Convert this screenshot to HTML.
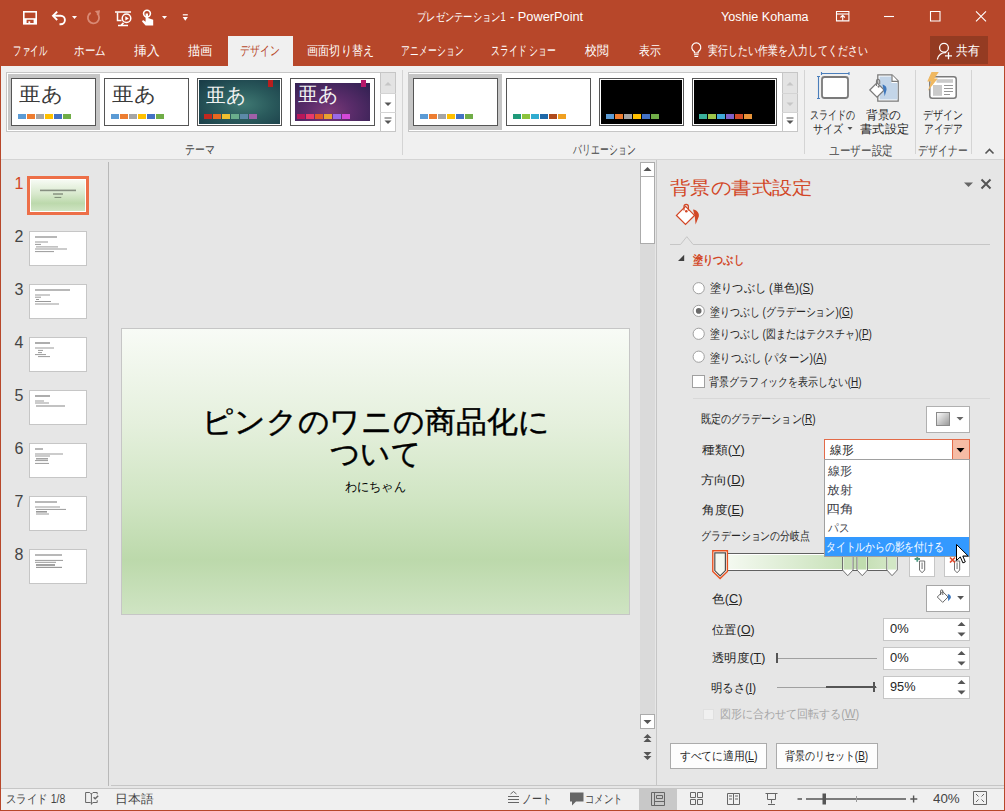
<!DOCTYPE html>
<html><head><meta charset="utf-8"><style>
*{box-sizing:border-box}
html,body{margin:0;padding:0}
body{width:1005px;height:811px;position:relative;overflow:hidden;background:#e6e6e6;font-family:"Liberation Sans",sans-serif}
.a{position:absolute}
.tx{position:absolute;z-index:3;white-space:nowrap;line-height:1.2;transform-origin:0 0}
</style></head><body>
<!-- title bar + tabs -->
<div class="a" style="left:0;top:0;width:1005px;height:66px;background:#b7472a"></div>
<!-- window border left/right/bottom -->
<div class="a" style="left:0;top:0;width:1px;height:811px;background:#b7472a;z-index:5"></div>
<div class="a" style="left:1004px;top:0;width:1px;height:811px;background:#b7472a;z-index:5"></div>
<div class="a" style="left:0;top:810px;width:1005px;height:1px;background:#b7472a;z-index:5"></div>
<!-- QAT icons -->
<svg class="a" style="left:0;top:0" width="200" height="36" viewBox="0 0 200 36">
 <path d="M23 11h14v13.6H23z" fill="#fff"/>
 <path d="M24.6 12.6h10.8v5.6H24.6z" fill="#b7472a"/>
 <path d="M26.6 19.8h7v3.2h-7z" fill="#b7472a"/>
 <path d="M28.4 21.3h1.8v1.8h-1.8z" fill="#fff"/>
 <path d="M53.5 15.8h7.2a4.2 4.2 0 0 1 0 8.4h-1.2" fill="none" stroke="#fff" stroke-width="1.9"/>
 <path d="M57.2 11.6l-4.2 4.2 4.2 4.2" fill="none" stroke="#fff" stroke-width="1.9"/>
 <path d="M72 16h5l-2.5 3z" fill="#fff"/>
 <path d="M90.7 12.9A5.6 5.6 0 1 0 97 13.4" fill="none" stroke="#d98a75" stroke-width="1.8"/>
 <path d="M94.8 11l5.2-0.8-0.9 5.4z" fill="#d98a75"/>
 <g fill="none" stroke="#fff" stroke-width="1.5">
  <path d="M115 12h16"/>
  <path d="M117.5 12.5v8h4"/>
  <circle cx="126.5" cy="18.3" r="4.3"/>
  <path d="M118 25.4h10M121 25.4l2.5-2.5"/>
 </g>
 <path d="M125.3 16.2v4.4l3.5-2.2z" fill="#fff"/>
 <circle cx="147" cy="13.6" r="3.4" fill="none" stroke="#fff" stroke-width="1.6"/>
 <path d="M145.6 13.5v8.2l-2.6-1.6-1 1.4 3.6 4h7.6v-5.8l-5.2-1.7v-4.5z" fill="#fff"/>
 <path d="M162 16h5l-2.5 3z" fill="#fff"/>
 <path d="M182.8 14.8h5" stroke="#fff" stroke-width="1.2"/>
 <path d="M182.7 17h5.2l-2.6 3.8z" fill="#fff"/>
</svg>
<!-- title right icons -->
<svg class="a" style="left:820px;top:0" width="185" height="36" viewBox="820 0 185 36">
 <g fill="none" stroke="#fff" stroke-width="1.1">
  <path d="M836.5 11.5h12.4v9.4h-12.4z"/>
  <path d="M836.5 14h12.4"/>
  <path d="M842.7 20.5v-5M840.5 17.5l2.2-2.2 2.2 2.2"/>
  <path d="M884 16.5h10"/>
  <path d="M930.5 11.5h9.5v9.5h-9.5z"/>
  <path d="M976 11.3l10 10M986 11.3l-10 10"/>
 </g>
</svg>
<!-- selected tab -->
<div class="a" style="left:228px;top:36px;width:65px;height:30px;background:#f0f0f0"></div>
<!-- bulb icon -->
<svg class="a" style="left:685px;top:38px" width="20" height="22" viewBox="685 38 20 22">
 <path d="M694.4 53v-1.5a4.5 4.5 0 1 1 3.8 0V53z" fill="none" stroke="#fff" stroke-width="1.2" stroke-linejoin="round"/>
 <path d="M694 54.8h4.6M694.4 56.5h3.8" stroke="#fff" stroke-width="1.1"/>
</svg>
<!-- share -->
<div class="a" style="left:930px;top:36px;width:58px;height:28px;background:#943b22"></div>
<svg class="a" style="left:930px;top:36px" width="30" height="28" viewBox="930 36 30 28">
 <g fill="none" stroke="#fff" stroke-width="1.3">
  <circle cx="944" cy="47.7" r="4.4"/>
  <path d="M937.3 59.5a8 8 0 0 1 9-6.8"/>
  <path d="M948.5 52.3v7M945 55.8h7"/>
 </g>
</svg>

<!-- ribbon -->
<div class="a" style="left:1px;top:66px;width:1003px;height:93px;background:#f0f0f0"></div>
<div class="a" style="left:1px;top:159px;width:1003px;height:1px;background:#d4d4d4"></div>

<!-- theme gallery -->
<div class="a" style="left:6px;top:72px;width:390px;height:60px;background:#fff;border:1px solid #c6c6c6"></div>
<div class="a" style="left:8px;top:74px;width:92px;height:56px;background:#c6c6c6"></div>
<div class="a" style="left:11px;top:78px;width:85px;height:48px;background:#fff;border:1px solid #555"></div>
<div class="a" style="left:104px;top:78px;width:85px;height:48px;background:#fff;border:1px solid #555"></div>
<div class="a" style="left:197px;top:78px;width:85px;height:48px;background:#fff;border:1px solid #555"></div>
<div class="a" style="left:199px;top:80px;width:81px;height:44px;background:radial-gradient(ellipse at 55% 55%,#3f7872 0%,#2a5a5c 45%,#183a46 100%)"></div>
<div class="a" style="left:268px;top:80px;width:5px;height:7px;background:#b81e1e"></div>
<div class="a" style="left:290px;top:78px;width:85px;height:48px;background:#fff;border:1px solid #555"></div>
<div class="a" style="left:295px;top:83px;width:75px;height:38px;background:radial-gradient(ellipse at 45% 75%,#7c3a78 0%,#5a2c6a 40%,#2e2050 100%)"></div>
<div class="a" style="left:361px;top:80px;width:5px;height:7px;background:#b8186a"></div>
<!-- gallery scroll -->
<div class="a" style="left:380px;top:72px;width:16px;height:60px;background:#fff;border:1px solid #c6c6c6"></div>
<div class="a" style="left:381px;top:73px;width:14px;height:20px;background:#e3e3e3"></div>
<div class="a" style="left:380px;top:93px;width:16px;height:1px;background:#d4d4d4"></div>
<div class="a" style="left:380px;top:112px;width:16px;height:1px;background:#d4d4d4"></div>
<svg class="a" style="left:380px;top:72px" width="16" height="60" viewBox="0 0 16 60">
 <path d="M4.5 13.5h7l-3.5-3.5z" fill="#c6c6c6"/>
 <path d="M4.5 30.5h7l-3.5 3.5z" fill="#555"/>
 <path d="M4.5 46h7" stroke="#555" stroke-width="1"/>
 <path d="M4.5 48.5h7l-3.5 3.5z" fill="#555"/>
</svg>
<!-- swatches -->
<svg class="a" style="left:0;top:110px" width="800" height="12" viewBox="0 110 800 12">
 <g>
  <rect x="18" y="114" width="8" height="5" fill="#5b9bd5"/><rect x="27" y="114" width="8" height="5" fill="#ed7d31"/><rect x="36" y="114" width="8" height="5" fill="#a5a5a5"/><rect x="45" y="114" width="8" height="5" fill="#ffc000"/><rect x="54" y="114" width="8" height="5" fill="#4472c4"/><rect x="63" y="114" width="8" height="5" fill="#70ad47"/>
  <rect x="111" y="114" width="8" height="5" fill="#5b9bd5"/><rect x="120" y="114" width="8" height="5" fill="#ed7d31"/><rect x="129" y="114" width="8" height="5" fill="#a5a5a5"/><rect x="138" y="114" width="8" height="5" fill="#ffc000"/><rect x="147" y="114" width="8" height="5" fill="#4472c4"/><rect x="156" y="114" width="8" height="5" fill="#70ad47"/>
  <rect x="204" y="114" width="8" height="5" fill="#c0281f"/><rect x="213" y="114" width="8" height="5" fill="#e8681f"/><rect x="222" y="114" width="8" height="5" fill="#f0c030"/><rect x="231" y="114" width="8" height="5" fill="#6aae8c"/><rect x="240" y="114" width="8" height="5" fill="#5c8aa8"/><rect x="249" y="114" width="8" height="5" fill="#a060a8"/>
  <rect x="297" y="114" width="8" height="5" fill="#b8185a"/><rect x="306" y="114" width="8" height="5" fill="#e83a6a"/><rect x="315" y="114" width="8" height="5" fill="#e05a28"/><rect x="324" y="114" width="8" height="5" fill="#e8a030"/><rect x="333" y="114" width="8" height="5" fill="#9a6ae8"/><rect x="342" y="114" width="8" height="5" fill="#d448d8"/>
 </g>
</svg>
<!-- group sep -->
<div class="a" style="left:402px;top:70px;width:1px;height:85px;background:#d4d4d4"></div>
<!-- variation gallery -->
<div class="a" style="left:408px;top:72px;width:390px;height:60px;background:#fff;border:1px solid #c6c6c6"></div>
<div class="a" style="left:409px;top:74px;width:93px;height:56px;background:#c6c6c6"></div>
<div class="a" style="left:413px;top:78px;width:85px;height:48px;background:#fff;border:1px solid #555"></div>
<div class="a" style="left:506px;top:78px;width:85px;height:48px;background:#fff;border:1px solid #555"></div>
<div class="a" style="left:599px;top:78px;width:85px;height:48px;background:#000;border:1px solid #555;box-shadow:inset 0 0 0 1px #fff"></div>
<div class="a" style="left:692px;top:78px;width:85px;height:48px;background:#000;border:1px solid #555;box-shadow:inset 0 0 0 1px #fff"></div>
<div class="a" style="left:782px;top:72px;width:16px;height:60px;background:#fff;border:1px solid #c6c6c6"></div>
<div class="a" style="left:783px;top:73px;width:14px;height:39px;background:#e3e3e3"></div>
<div class="a" style="left:782px;top:93px;width:16px;height:1px;background:#d4d4d4"></div>
<div class="a" style="left:782px;top:112px;width:16px;height:1px;background:#d4d4d4"></div>
<svg class="a" style="left:782px;top:72px" width="16" height="60" viewBox="0 0 16 60">
 <path d="M4.5 13.5h7l-3.5-3.5z" fill="#c6c6c6"/>
 <path d="M4.5 30.5h7l-3.5 3.5z" fill="#c6c6c6"/>
 <path d="M4.5 46h7" stroke="#555" stroke-width="1"/>
 <path d="M4.5 48.5h7l-3.5 3.5z" fill="#555"/>
</svg>
<svg class="a" style="left:400px;top:110px" width="400" height="12" viewBox="400 110 400 12">
  <rect x="420" y="114" width="8" height="5" fill="#5b9bd5"/><rect x="429" y="114" width="8" height="5" fill="#ed7d31"/><rect x="438" y="114" width="8" height="5" fill="#a5a5a5"/><rect x="447" y="114" width="8" height="5" fill="#ffc000"/><rect x="456" y="114" width="8" height="5" fill="#4472c4"/><rect x="465" y="114" width="8" height="5" fill="#70ad47"/>
  <rect x="513" y="114" width="8" height="5" fill="#1f9a7a"/><rect x="522" y="114" width="8" height="5" fill="#8cc43c"/><rect x="531" y="114" width="8" height="5" fill="#30acd0"/><rect x="540" y="114" width="8" height="5" fill="#1f68a8"/><rect x="549" y="114" width="8" height="5" fill="#b04a1c"/><rect x="558" y="114" width="8" height="5" fill="#f0a020"/>
  <rect x="606" y="114" width="8" height="5" fill="#5b9bd5"/><rect x="615" y="114" width="8" height="5" fill="#ed7d31"/><rect x="624" y="114" width="8" height="5" fill="#a5a5a5"/><rect x="633" y="114" width="8" height="5" fill="#ffc000"/><rect x="642" y="114" width="8" height="5" fill="#4472c4"/><rect x="651" y="114" width="8" height="5" fill="#70ad47"/>
  <rect x="699" y="114" width="8" height="5" fill="#3ab09a"/><rect x="708" y="114" width="8" height="5" fill="#9cc44a"/><rect x="717" y="114" width="8" height="5" fill="#40a8d8"/><rect x="726" y="114" width="8" height="5" fill="#8060c8"/><rect x="735" y="114" width="8" height="5" fill="#d04a28"/><rect x="744" y="114" width="8" height="5" fill="#e8943a"/>
</svg>
<div class="a" style="left:804px;top:70px;width:1px;height:84px;background:#d4d4d4"></div>
<div class="a" style="left:915px;top:70px;width:1px;height:84px;background:#d4d4d4"></div>
<div class="a" style="left:971px;top:70px;width:1px;height:84px;background:#d4d4d4"></div>
<!-- slide size icon -->
<svg class="a" style="left:810px;top:68px" width="100" height="40" viewBox="810 68 100 40">
 <rect x="822" y="77" width="26" height="21" rx="2.5" fill="#fff" stroke="#7a7a7a" stroke-width="1.8"/>
 <path d="M821.5 73.5h27.5M821.5 72v3M849 72v3M818.5 76.5v22M817 76.5h3M817 98.5h3" stroke="#4a7ebb" stroke-width="1.1" fill="none"/>
 <path d="M877.8 74.8h14.2l6.2 6.2v20.2h-20.4z" fill="#fff" stroke="#7a7a7a" stroke-width="1.3"/>
 <path d="M879.5 76.5h12v6.5h6v16.5h-18z" fill="#c3d5e8"/>
 <path d="M892 75v6.4h6.2" fill="#fff" stroke="#7a7a7a" stroke-width="1.2"/>
 <path d="M869.8 90l7.2-7.2 7.2 7.2-7.2 7.2z" fill="#fff" stroke="#7a7a7a" stroke-width="1.2"/>
 <path d="M876.5 86v-5a1.6 1.6 0 0 1 3.2 0v3" fill="none" stroke="#7a7a7a" stroke-width="1.1"/>
 <circle cx="878.6" cy="86.6" r="1.1" fill="#7a7a7a"/>
 <path d="M882.5 84.5c2.5 0.5 4.5 2.5 4 5.5l-1.8 6.2-1-5.5z" fill="#3f78bd"/>
</svg>
<svg class="a" style="left:846px;top:126px" width="10" height="6" viewBox="0 0 10 6"><path d="M1.5 1h5l-2.5 3z" fill="#555"/></svg>
<!-- designer icon -->
<svg class="a" style="left:915px;top:68px" width="56" height="40" viewBox="915 68 56 40">
 <rect x="929.8" y="76.8" width="26.4" height="21.4" rx="2.5" fill="#fff" stroke="#7a7a7a" stroke-width="1.5"/>
 <rect x="936.5" y="79.2" width="16.5" height="3.6" fill="#cacaca"/>
 <rect x="933" y="85" width="9" height="10.8" fill="#cacaca"/>
 <path d="M944 85.5h9M944 88.5h9M944 91.5h9M944 94.5h6" stroke="#8a8a8a" stroke-width="0.9"/>
 <path d="M931.5 72h7.3l-4.5 6.5h3.5l-10 12.5 3.5-9.5h-4z" fill="#f0b860"/>
</svg>
<!-- collapse caret -->
<svg class="a" style="left:982px;top:145px" width="16" height="12" viewBox="0 0 16 12"><path d="M3.5 8.5l4-4 4 4" fill="none" stroke="#555" stroke-width="1.6"/></svg>

<!-- left slide panel -->
<div class="a" style="left:108px;top:162px;width:1px;height:624px;background:#b8b8b8"></div>
<!-- slide thumbnails -->
<div class="a" style="left:27px;top:176px;width:62px;height:39px;background:#fff;border:3px solid #ed6f48"></div>
<div class="a" style="left:31px;top:180px;width:54px;height:31px;background:linear-gradient(#f6faf3,#d8e9cd 45%,#bcd9ac 75%,#cfe4c3)"></div>
<div class="a" style="left:29px;top:231px;width:58px;height:35px;background:#fff;border:1px solid #c6c6c6"></div>
<div class="a" style="left:29px;top:284px;width:58px;height:35px;background:#fff;border:1px solid #c6c6c6"></div>
<div class="a" style="left:29px;top:337px;width:58px;height:35px;background:#fff;border:1px solid #c6c6c6"></div>
<div class="a" style="left:29px;top:390px;width:58px;height:35px;background:#fff;border:1px solid #c6c6c6"></div>
<div class="a" style="left:29px;top:443px;width:58px;height:35px;background:#fff;border:1px solid #c6c6c6"></div>
<div class="a" style="left:29px;top:496px;width:58px;height:35px;background:#fff;border:1px solid #c6c6c6"></div>
<div class="a" style="left:29px;top:549px;width:58px;height:35px;background:#fff;border:1px solid #c6c6c6"></div>
<svg class="a" style="left:0;top:160px" width="100" height="440" viewBox="0 160 100 440">
<rect x="35" y="236.3" width="22" height="1.4" fill="#000" opacity=".4"/>
<rect x="35" y="241.5" width="13" height="1" fill="#000" opacity=".4"/>
<rect x="35" y="243.9" width="6" height="1" fill="#000" opacity=".4"/>
<rect x="36" y="246.4" width="22" height="1" fill="#000" opacity=".4"/>
<rect x="35" y="248.5" width="32" height="1" fill="#000" opacity=".4"/>
<rect x="35" y="251.1" width="19" height="1" fill="#000" opacity=".4"/>
<rect x="35" y="289.3" width="35" height="1.4" fill="#000" opacity=".4"/>
<rect x="35" y="294.5" width="15" height="1" fill="#000" opacity=".4"/>
<rect x="35" y="296.7" width="6" height="1" fill="#000" opacity=".4"/>
<rect x="36" y="299.0" width="3" height="1" fill="#000" opacity=".4"/>
<rect x="35" y="301.0" width="16" height="1" fill="#000" opacity=".4"/>
<rect x="35" y="303.5" width="24" height="1" fill="#000" opacity=".4"/>
<rect x="35" y="342.2" width="15" height="1.6" fill="#000" opacity=".4"/>
<rect x="35" y="347.5" width="19" height="1" fill="#000" opacity=".4"/>
<rect x="38" y="349.9" width="5" height="1" fill="#000" opacity=".4"/>
<rect x="38" y="352.1" width="4" height="1" fill="#000" opacity=".4"/>
<rect x="35" y="354.1" width="11" height="1" fill="#000" opacity=".4"/>
<rect x="38" y="356.1" width="12" height="1" fill="#000" opacity=".4"/>
<rect x="35" y="395.2" width="15" height="1.6" fill="#000" opacity=".4"/>
<rect x="35" y="400.5" width="9" height="1" fill="#000" opacity=".4"/>
<rect x="35" y="402.5" width="14" height="1" fill="#000" opacity=".4"/>
<rect x="36" y="405.4" width="29" height="1.2" fill="#000" opacity=".4"/>
<rect x="35" y="448.3" width="8" height="1.4" fill="#000" opacity=".4"/>
<rect x="35" y="453.5" width="28" height="1" fill="#000" opacity=".4"/>
<rect x="35" y="455.5" width="15" height="1" fill="#000" opacity=".4"/>
<rect x="36" y="458.1" width="12" height="1.4" fill="#000" opacity=".4"/>
<rect x="35" y="460.1" width="13" height="1" fill="#000" opacity=".4"/>
<rect x="35" y="462.9" width="14" height="1" fill="#000" opacity=".4"/>
<rect x="35" y="501.3" width="22" height="1.4" fill="#000" opacity=".4"/>
<rect x="35" y="506.5" width="25" height="1" fill="#000" opacity=".4"/>
<rect x="36" y="508.9" width="30" height="1" fill="#000" opacity=".4"/>
<rect x="36" y="511.0" width="11" height="1.6" fill="#000" opacity=".4"/>
<rect x="36" y="513.5" width="13" height="1" fill="#000" opacity=".4"/>
<rect x="35" y="554.3" width="27" height="1.4" fill="#000" opacity=".4"/>
<rect x="35" y="559.9" width="28" height="1" fill="#000" opacity=".4"/>
<rect x="35" y="561.8" width="21" height="1" fill="#000" opacity=".4"/>
<rect x="36" y="564.1" width="19" height="1.8" fill="#000" opacity=".4"/>
<rect x="36" y="566.8" width="26" height="1.2" fill="#000" opacity=".4"/>
<rect x="40" y="189.6" width="36.0" height="1.6" fill="#000" opacity=".4"/>
<rect x="53" y="193.3" width="10.0" height="1.4" fill="#000" opacity=".4"/>
<rect x="54.5" y="196.9" width="6.8" height="1" fill="#000" opacity=".4"/>
</svg>
<!-- slide numbers -->
<div class="a" style="left:14.5px;top:175px;font-size:16px;line-height:18px;color:#d24726">1</div>
<div class="a" style="left:14.5px;top:228px;font-size:16px;line-height:18px;color:#444">2</div>
<div class="a" style="left:14.5px;top:281px;font-size:16px;line-height:18px;color:#444">3</div>
<div class="a" style="left:14.5px;top:334px;font-size:16px;line-height:18px;color:#444">4</div>
<div class="a" style="left:14.5px;top:387px;font-size:16px;line-height:18px;color:#444">5</div>
<div class="a" style="left:14.5px;top:440px;font-size:16px;line-height:18px;color:#444">6</div>
<div class="a" style="left:14.5px;top:493px;font-size:16px;line-height:18px;color:#444">7</div>
<div class="a" style="left:14.5px;top:546px;font-size:16px;line-height:18px;color:#444">8</div>

<!-- main slide -->
<div class="a" style="left:121px;top:328px;width:509px;height:287px;border:1px solid #c6c6c6;background:linear-gradient(#f8fbf6 0%,#e5f0dd 33%,#d0e5c3 60%,#bcd9ab 81%,#cfe4c3 100%)"></div>
<!-- vertical scrollbar -->
<div class="a" style="left:656px;top:160px;width:1px;height:626px;background:#c6c6c6"></div>
<div class="a" style="left:640px;top:162px;width:15px;height:567px;background:#dadada"></div>
<div class="a" style="left:640px;top:162px;width:15px;height:15px;background:#fff;border:1px solid #ababab"></div>
<div class="a" style="left:640px;top:176px;width:15px;height:68px;background:#fff;border:1px solid #ababab"></div>
<div class="a" style="left:640px;top:714px;width:15px;height:15px;background:#fff;border:1px solid #ababab"></div>
<svg class="a" style="left:640px;top:162px" width="15" height="15" viewBox="0 0 15 15"><path d="M3.5 9h8l-4-4z" fill="#555"/></svg>
<svg class="a" style="left:640px;top:714px" width="15" height="15" viewBox="0 0 15 15"><path d="M3.5 6h8l-4 4z" fill="#555"/></svg>
<svg class="a" style="left:640px;top:730px" width="15" height="34" viewBox="0 0 15 34">
 <path d="M3.5 8h8l-4-4z M3.5 12h8l-4-4z" fill="#555"/>
 <path d="M3.5 22h8l-4 4z M3.5 26h8l-4 4z" fill="#555"/>
</svg>
<!-- main area bottom line -->
<div class="a" style="left:111px;top:785px;width:893px;height:1px;background:#c6c6c6"></div>

<!-- task pane -->
<svg class="a" style="left:660px;top:170px" width="340" height="100" viewBox="660 170 340 100">
 <path d="M964 182.5h9l-4.5 4.5z" fill="#666"/>
 <path d="M981.5 179.5l9 9M990.5 179.5l-9 9" stroke="#555" stroke-width="2"/>
 <path d="M676.5 215.4l9-9 9 9-9 9z" fill="#fff" stroke="#d24726" stroke-width="1.3"/>
 <path d="M684 210.5v-4a2.2 2.2 0 0 1 4.4 0v4" fill="none" stroke="#d24726" stroke-width="1.2"/>
 <circle cx="686.3" cy="211.3" r="1.3" fill="#d24726"/>
 <path d="M693 209.5c4 0.5 6.5 3.5 5.8 7l-3.2 8-0.8-8z" fill="#d24726"/>
 <path d="M670 244.5h10.5l6.3-7.8 6.3 7.8H990" fill="none" stroke="#c6c6c6" stroke-width="1"/>
 <path d="M678 261h6.2v-6.2z" fill="#404040"/>
</svg>
<!-- radios -->
<svg class="a" style="left:688px;top:278px" width="22" height="115" viewBox="688 278 22 115">
 <g fill="#fff" stroke="#a0a0a0" stroke-width="1">
  <circle cx="698.7" cy="288.2" r="5.6"/>
  <circle cx="698.7" cy="310.9" r="5.6"/>
  <circle cx="698.7" cy="333.8" r="5.6"/>
  <circle cx="698.7" cy="356.7" r="5.6"/>
  <rect x="692.5" y="375.5" width="12" height="12"/>
 </g>
 <circle cx="698.7" cy="310.9" r="2.8" fill="#6a6a6a"/>
</svg>
<!-- preset gradient button -->
<div class="a" style="left:926px;top:406px;width:44px;height:27px;background:#fff;border:1px solid #b0b0b0"></div>
<div class="a" style="left:936px;top:412px;width:14px;height:14px;border:1px solid #8a8a8a;background:linear-gradient(135deg,#fafafa,#9a9a9a)"></div>
<svg class="a" style="left:955px;top:415px" width="10" height="8" viewBox="0 0 10 8"><path d="M1.5 2h7l-3.5 3.5z" fill="#666"/></svg>
<!-- section line -->
<div class="a" style="left:693px;top:398px;width:297px;height:1px;background:#d8d8d8"></div>
<!-- combo type -->
<div class="a" style="left:824px;top:439px;width:146px;height:21px;background:#fff;border:1px solid #e36a48"></div>
<div class="a" style="left:952px;top:440px;width:17px;height:19px;background:#f6bca5;border-left:1px solid #e36a48"></div>
<svg class="a" style="left:952px;top:440px" width="17" height="19" viewBox="0 0 17 19"><path d="M4.5 8h8l-4 4.5z" fill="#000"/></svg>
<!-- gradient stops bar -->
<div class="a" style="left:720px;top:553px;width:177px;height:18px;border:1px solid #606060;background:#fff"></div>
<div class="a" style="left:722px;top:555px;width:173px;height:14px;background:linear-gradient(90deg,#f6faf3,#c9e2ba 70%,#c4deb3 80%,#d5e8c8)"></div>
<svg class="a" style="left:705px;top:545px" width="200" height="40" viewBox="705 545 200 40">
 <path d="M712.8 550.8h14.6v20.6l-7.3 7.2-7.3-7.2z" fill="#fff" stroke="#e8501e" stroke-width="1.4"/>
 <path d="M714.8 552.8h10.6v17.8l-5.3 5.3-5.3-5.3z" fill="#f3f8f1" stroke="#505050" stroke-width="1.2"/>
 <path d="M842.5 553.5h10.5v16.5l-5.25 5.7-5.25-5.7z" fill="#fff" stroke="#707070" stroke-width="1"/>
 <rect x="843.5" y="554.5" width="8.5" height="15" fill="#c6dfb6"/>
 <path d="M857 553.5h10.5v16.5l-5.25 5.7-5.25-5.7z" fill="#fff" stroke="#707070" stroke-width="1"/>
 <rect x="858" y="554.5" width="8.5" height="15" fill="#c0dcae"/>
 <path d="M886.8 553.5h10.5v16.5l-5.25 5.7-5.25-5.7z" fill="#fff" stroke="#707070" stroke-width="1"/>
 <rect x="887.8" y="554.5" width="8.5" height="15" fill="#d2e7c5"/>
</svg>
<!-- add/remove stop -->
<div class="a" style="left:909px;top:553px;width:26px;height:24px;background:#fff;border:1px solid #c6c6c6"></div>
<div class="a" style="left:944px;top:553px;width:26px;height:24px;background:#fff;border:1px solid #c6c6c6"></div>
<svg class="a" style="left:905px;top:545px" width="70" height="40" viewBox="905 545 70 40">
 <path d="M919.5 561v9l2.6 2.8 2.6-2.8v-9z" fill="#fff" stroke="#707070" stroke-width="1"/>
 <rect x="921.4" y="562.5" width="1.4" height="6.5" fill="#9a9a9a"/>
 <path d="M914.6 559h5.4M917.3 556.3v5.4" stroke="#4f9a84" stroke-width="1.8"/>
 <path d="M954.5 561v9l2.6 2.8 2.6-2.8v-9z" fill="#fff" stroke="#707070" stroke-width="1"/>
 <rect x="956.4" y="562.5" width="1.4" height="6.5" fill="#9a9a9a"/>
 <path d="M950 557.5l5 5M955 557.5l-5 5" stroke="#e0482a" stroke-width="1.7"/>
</svg>
<!-- color button -->
<div class="a" style="left:926px;top:585px;width:44px;height:27px;background:#fff;border:1px solid #a6a6a6"></div>
<svg class="a" style="left:926px;top:585px" width="44" height="27" viewBox="926 585 44 27">
 <path d="M937.3 597l5.4-5.4 5.4 5.4-5.4 5.4z" fill="#fff" stroke="#555" stroke-width="0.9"/>
 <path d="M940.6 595v-4a1.1 1.1 0 0 1 2.2 0v4" fill="none" stroke="#555" stroke-width="0.9"/>
 <path d="M947.8 594c2.2 0.2 3.6 2.2 3 4l-2.6 3.2z" fill="#3f78bd"/>
 <path d="M957.2 596h6.8l-3.4 3.8z" fill="#555"/>
</svg>
<!-- spin boxes -->
<div class="a" style="left:883px;top:618px;width:87px;height:23px;background:#fff;border:1px solid #c6c6c6"></div>
<div class="a" style="left:883px;top:647px;width:87px;height:23px;background:#fff;border:1px solid #c6c6c6"></div>
<div class="a" style="left:883px;top:676px;width:87px;height:23px;background:#fff;border:1px solid #c6c6c6"></div>
<svg class="a" style="left:950px;top:615px" width="20" height="90" viewBox="950 615 20 90">
 <g fill="#555">
  <path d="M957.5 626h8l-4-4z"/><path d="M957.5 632.5h8l-4 4z"/>
  <path d="M957.5 655h8l-4-4z"/><path d="M957.5 661.5h8l-4 4z"/>
  <path d="M957.5 684h8l-4-4z"/><path d="M957.5 690.5h8l-4 4z"/>
 </g>
</svg>
<!-- sliders -->
<div class="a" style="left:777px;top:658px;width:100px;height:1px;background:#a0a0a0"></div>
<div class="a" style="left:776px;top:653px;width:2px;height:10px;background:#555"></div>
<div class="a" style="left:777px;top:687px;width:100px;height:1px;background:#a0a0a0"></div>
<div class="a" style="left:826px;top:686px;width:50px;height:2px;background:#555"></div>
<div class="a" style="left:873px;top:682px;width:2px;height:10px;background:#555"></div>
<!-- disabled checkbox -->
<div class="a" style="left:703px;top:709px;width:11px;height:11px;background:#f0f0f0;border:1px solid #e0e0e0"></div>
<!-- buttons -->
<div class="a" style="left:670px;top:743px;width:97px;height:26px;background:#fdfdfd;border:1px solid #ababab"></div>
<div class="a" style="left:776px;top:743px;width:102px;height:26px;background:#fdfdfd;border:1px solid #ababab"></div>

<!-- dropdown list -->
<div class="a" style="left:824px;top:459px;width:146px;height:98px;background:#fff;border:1px solid #a0a0a0;z-index:2"></div>
<div class="a" style="left:825px;top:537px;width:144px;height:19px;background:#3399ff;z-index:2"></div>

<!-- status bar -->
<div class="a" style="left:1px;top:788px;width:1003px;height:1px;background:#c6c6c6"></div>
<div class="a" style="left:1px;top:789px;width:1003px;height:21px;background:#f0f0f0"></div>
<div class="a" style="left:639px;top:789px;width:38px;height:21px;background:#c8c8c8"></div>
<svg class="a" style="left:0;top:786px" width="1005" height="25" viewBox="0 786 1005 25">
 <g fill="none" stroke="#666" stroke-width="1">
  <path d="M91.4 803.5l-1-1H85.6v-10h4.2l1.6 1.6 1.6-1.6h4.2v1.8M97.2 800.2v2.3h-4.2l-1.6 1.5M91.4 793.5v11"/>
  <path d="M93.6 797.2l1.6 1.6 3-3" stroke-width="1.5"/>
  <path d="M508 796.5h11M508 799.5h11M508 802.5h11M510.5 794l3-2.5 3 2.5"/>
  <path d="M651.5 792.5h13v13h-13zM654.5 792.5v13M656.5 795.5h6v3h-6zM654.5 801.5h10"/>
  <path d="M690.5 792.5h5v5h-5zM697.5 792.5h5v5h-5zM690.5 799.5h5v5h-5zM697.5 799.5h5v5h-5z"/>
  <path d="M727.5 793.5h6v11h-6zM733.5 793.5h6v11h-6zM729 796h3M729 799h3M735 796h3M735 799h3"/>
  <path d="M765.5 793.5h12M767.5 793.5v6h8v-6M771.5 799.5v4M768 804.5h7"/>
  <path d="M973.5 791.5h13v13h-13zM976 794l2.5 2.5M984 794l-2.5 2.5M976 802l2.5-2.5M984 802l-2.5-2.5"/>
 </g>
 <path d="M570 792.5h13.5v9h-7.5l-4 4v-4h-2z" fill="#666"/>
 <path d="M797.5 799h4.5M806 799h100M910.3 799h7M913.6 795.5v7" stroke="#555" stroke-width="1.4"/>
 <path d="M856.5 796v6" stroke="#999" stroke-width="1"/>
 <rect x="822.5" y="793.5" width="3.5" height="11" fill="#555"/>
</svg>
<!-- mouse cursor -->
<svg class="a" style="left:950px;top:540px;z-index:4" width="24" height="30" viewBox="950 540 24 30">
 <path d="M956.5 544.5v16l3.8-3.6 2.6 6 2.4-1-2.5-5.9h5.4z" fill="#fff" stroke="#000" stroke-width="1" stroke-linejoin="miter"/>
</svg>

<span id="t0" class="tx" style="font-size:12px;color:#fff;left:417.23px;top:10.00px;transform:scale(0.7743,1.000);">プレゼンテーション1</span>
<span id="t1" class="tx" style="font-size:12.5px;color:#fff;left:509.78px;top:10.00px;transform:scale(1.0225,1.000);">- PowerPoint</span>
<span id="t2" class="tx" style="font-size:12px;color:#fff;left:721.00px;top:10.30px;transform:scale(1.0476,1.000);">Yoshie Kohama</span>
<span id="t3" class="tx" style="font-size:12px;color:#fff;left:13.29px;top:43.30px;transform:scale(0.7149,1.100);">ファイル</span>
<span id="t4" class="tx" style="font-size:12px;color:#fff;left:74.17px;top:43.30px;transform:scale(0.8882,1.100);">ホーム</span>
<span id="t5" class="tx" style="font-size:12px;color:#fff;left:134.16px;top:43.30px;transform:scale(1.0739,1.100);">挿入</span>
<span id="t6" class="tx" style="font-size:12px;color:#fff;left:188.00px;top:43.30px;transform:scale(1.0348,1.100);">描画</span>
<span id="t7" class="tx" style="font-size:12px;color:#fff;left:307.06px;top:43.30px;transform:scale(0.9357,1.100);">画面切り替え</span>
<span id="t8" class="tx" style="font-size:12px;color:#fff;left:401.26px;top:43.30px;transform:scale(0.7439,1.100);">アニメーション</span>
<span id="t9" class="tx" style="font-size:12px;color:#fff;left:491.25px;top:43.30px;transform:scale(0.7471,1.100);">スライド ショー</span>
<span id="t10" class="tx" style="font-size:12px;color:#fff;left:585.00px;top:43.30px;transform:scale(1.0000,1.100);">校閲</span>
<span id="t11" class="tx" style="font-size:12px;color:#fff;left:639.00px;top:43.30px;transform:scale(0.9167,1.100);">表示</span>
<span id="t12" class="tx" style="font-size:12px;color:#fff;left:708.00px;top:43.30px;transform:scale(0.8333,1.100);">実行したい作業を入力してください</span>
<span id="t13" class="tx" style="font-size:12px;color:#fff;left:956.00px;top:43.30px;transform:scale(1.0000,1.100);">共有</span>
<span id="t14" class="tx" style="font-size:12px;color:#b7472a;left:239.61px;top:43.30px;transform:scale(0.8326,1.100);">デザイン</span>
<span id="t15" class="tx" style="font-size:12px;color:#444;left:185.43px;top:142.30px;transform:scale(0.8353,1.100);">テーマ</span>
<span id="t16" class="tx" style="font-size:12px;color:#444;left:573.00px;top:142.30px;transform:scale(0.7434,1.100);">バリエーション</span>
<span id="t17" class="tx" style="font-size:12px;color:#262626;left:809.71px;top:108.00px;transform:scale(0.7508,1.000);">スライドの</span>
<span id="t18" class="tx" style="font-size:12px;color:#262626;left:813.17px;top:121.70px;transform:scale(0.8286,1.000);">サイズ</span>
<span id="t19" class="tx" style="font-size:12px;color:#262626;left:866.03px;top:108.00px;transform:scale(0.9714,1.000);">背景の</span>
<span id="t20" class="tx" style="font-size:12px;color:#262626;left:860.00px;top:121.70px;transform:scale(1.0213,1.000);">書式設定</span>
<span id="t21" class="tx" style="font-size:12px;color:#444;left:828.75px;top:142.90px;transform:scale(0.8915,1.100);">ユーザー設定</span>
<span id="t22" class="tx" style="font-size:12px;color:#262626;left:923.17px;top:108.00px;transform:scale(0.8261,1.000);">デザイン</span>
<span id="t23" class="tx" style="font-size:12px;color:#262626;left:924.20px;top:121.70px;transform:scale(0.8043,1.000);">アイデア</span>
<span id="t24" class="tx" style="font-size:12px;color:#444;left:917.61px;top:142.90px;transform:scale(0.8276,1.100);">デザイナー</span>
<span id="t25" class="tx" style="font-size:20px;color:#3a3a3a;left:19.00px;top:81.70px;transform:scale(1.0789,1.000);">亜あ</span>
<span id="t26" class="tx" style="font-size:20px;color:#3a3a3a;left:112.00px;top:81.70px;transform:scale(1.0789,1.000);">亜あ</span>
<span id="t27" class="tx" style="font-size:20px;color:#f2f2f2;left:205.78px;top:82.50px;transform:scale(0.9816,1.000);">亜あ</span>
<span id="t28" class="tx" style="font-size:20px;color:#f2f2f2;left:298.39px;top:82.30px;transform:scale(0.9921,1.000);">亜あ</span>
<span id="t29" class="tx" style="font-size:30px;color:#000;-webkit-text-stroke:0.45px #000;left:202.24px;top:404.10px;transform:scale(1.0279,1.000);">ピンクのワニの商品化に</span>
<span id="t30" class="tx" style="font-size:30px;color:#000;-webkit-text-stroke:0.45px #000;left:330.03px;top:435.70px;transform:scale(0.9818,1.000);">ついて</span>
<span id="t31" class="tx" style="font-size:13px;color:#000;left:345.00px;top:479.00px;transform:scale(0.9328,1.000);">わにちゃん</span>
<span id="t32" class="tx" style="font-size:18px;color:#d24726;left:670.35px;top:178.00px;transform:scale(1.1336,1.000);">背景の書式設定</span>
<span id="t33" class="tx" style="font-size:12px;color:#d24726;font-weight:bold;left:692.55px;top:253.00px;transform:scale(0.8466,1.000);">塗りつぶし</span>
<span id="t34" class="tx" style="font-size:12px;color:#262626;left:710.00px;top:281.00px;transform:scale(0.9324,1.000);">塗りつぶし (単色)(<u>S</u>)</span>
<span id="t35" class="tx" style="font-size:12px;color:#262626;left:710.00px;top:304.50px;transform:scale(0.8285,1.000);">塗りつぶし (グラデーション)(<u>G</u>)</span>
<span id="t36" class="tx" style="font-size:12px;color:#262626;left:710.00px;top:327.20px;transform:scale(0.8287,1.000);">塗りつぶし (図またはテクスチャ)(<u>P</u>)</span>
<span id="t37" class="tx" style="font-size:12px;color:#262626;left:710.00px;top:350.80px;transform:scale(0.8622,1.000);">塗りつぶし (パターン)(<u>A</u>)</span>
<span id="t38" class="tx" style="font-size:12px;color:#262626;left:709.17px;top:375.00px;transform:scale(0.8262,1.000);">背景グラフィックを表示しない(<u>H</u>)</span>
<span id="t39" class="tx" style="font-size:12px;color:#262626;left:701.16px;top:412.30px;transform:scale(0.8385,1.000);">既定のグラデーション(<u>R</u>)</span>
<span id="t40" class="tx" style="font-size:12px;color:#262626;left:702.00px;top:443.00px;transform:scale(1.0692,1.000);">種類(<u>Y</u>)</span>
<span id="t41" class="tx" style="font-size:12px;color:#262626;left:700.92px;top:472.70px;transform:scale(1.0769,1.000);">方向(<u>D</u>)</span>
<span id="t42" class="tx" style="font-size:12px;color:#262626;left:702.00px;top:502.80px;transform:scale(1.0513,1.000);">角度(<u>E</u>)</span>
<span id="t43" class="tx" style="font-size:12px;color:#262626;left:701.17px;top:529.30px;transform:scale(0.8262,1.000);">グラデーションの分岐点</span>
<span id="t44" class="tx" style="font-size:12px;color:#262626;left:712.00px;top:591.80px;transform:scale(1.0607,1.000);">色(<u>C</u>)</span>
<span id="t45" class="tx" style="font-size:12px;color:#262626;left:712.00px;top:622.50px;transform:scale(1.0317,1.000);">位置(<u>O</u>)</span>
<span id="t46" class="tx" style="font-size:12px;color:#262626;left:712.00px;top:651.40px;transform:scale(1.0392,1.000);">透明度(<u>T</u>)</span>
<span id="t47" class="tx" style="font-size:12px;color:#262626;left:711.05px;top:680.50px;transform:scale(0.9522,1.000);">明るさ(<u>I</u>)</span>
<span id="t48" class="tx" style="font-size:12px;color:#262626;left:890.00px;top:622.30px;transform:scale(1.0765,1.000);">0%</span>
<span id="t49" class="tx" style="font-size:12px;color:#262626;left:890.00px;top:651.30px;transform:scale(1.0765,1.000);">0%</span>
<span id="t50" class="tx" style="font-size:12px;color:#262626;left:890.00px;top:680.30px;transform:scale(1.0625,1.000);">95%</span>
<span id="t51" class="tx" style="font-size:12px;color:#a6a6a6;left:719.84px;top:707.00px;transform:scale(0.9193,1.000);">図形に合わせて回転する(<u>W</u>)</span>
<span id="t52" class="tx" style="font-size:12px;color:#262626;left:680.00px;top:749.00px;transform:scale(0.8953,1.000);">すべてに適用(<u>L</u>)</span>
<span id="t53" class="tx" style="font-size:12px;color:#262626;left:785.17px;top:749.00px;transform:scale(0.8316,1.000);">背景のリセット(<u>B</u>)</span>
<span id="t54" class="tx" style="font-size:12px;color:#262626;left:829.78px;top:443.00px;transform:scale(0.9833,1.000);">線形</span>
<span id="t55" class="tx" style="font-size:12px;color:#40424a;left:827.60px;top:464.00px;transform:scale(1.0083,1.000);">線形</span>
<span id="t56" class="tx" style="font-size:12px;color:#40424a;left:826.53px;top:482.70px;transform:scale(1.0522,1.000);">放射</span>
<span id="t57" class="tx" style="font-size:12px;color:#40424a;left:826.41px;top:501.60px;transform:scale(1.1524,1.000);">四角</span>
<span id="t58" class="tx" style="font-size:12px;color:#40424a;left:827.62px;top:521.20px;transform:scale(0.8783,1.000);">パス</span>
<span id="t59" class="tx" style="font-size:12px;color:#fff;left:826.36px;top:540.00px;transform:scale(0.8177,1.000);">タイトルからの影を付ける</span>
<span id="t60" class="tx" style="font-size:12px;color:#444;left:6.19px;top:792.00px;transform:scale(0.8712,1.000);">スライド 1/8</span>
<span id="t61" class="tx" style="font-size:12px;color:#444;left:114.68px;top:792.00px;transform:scale(1.0667,1.000);">日本語</span>
<span id="t62" class="tx" style="font-size:12px;color:#444;left:522.34px;top:792.00px;transform:scale(0.8323,1.000);">ノート</span>
<span id="t63" class="tx" style="font-size:12px;color:#444;left:584.71px;top:792.00px;transform:scale(0.7860,1.000);">コメント</span>
<span id="t64" class="tx" style="font-size:12px;color:#444;left:932.72px;top:792.30px;transform:scale(1.1130,1.000);">40%</span>
</body></html>
